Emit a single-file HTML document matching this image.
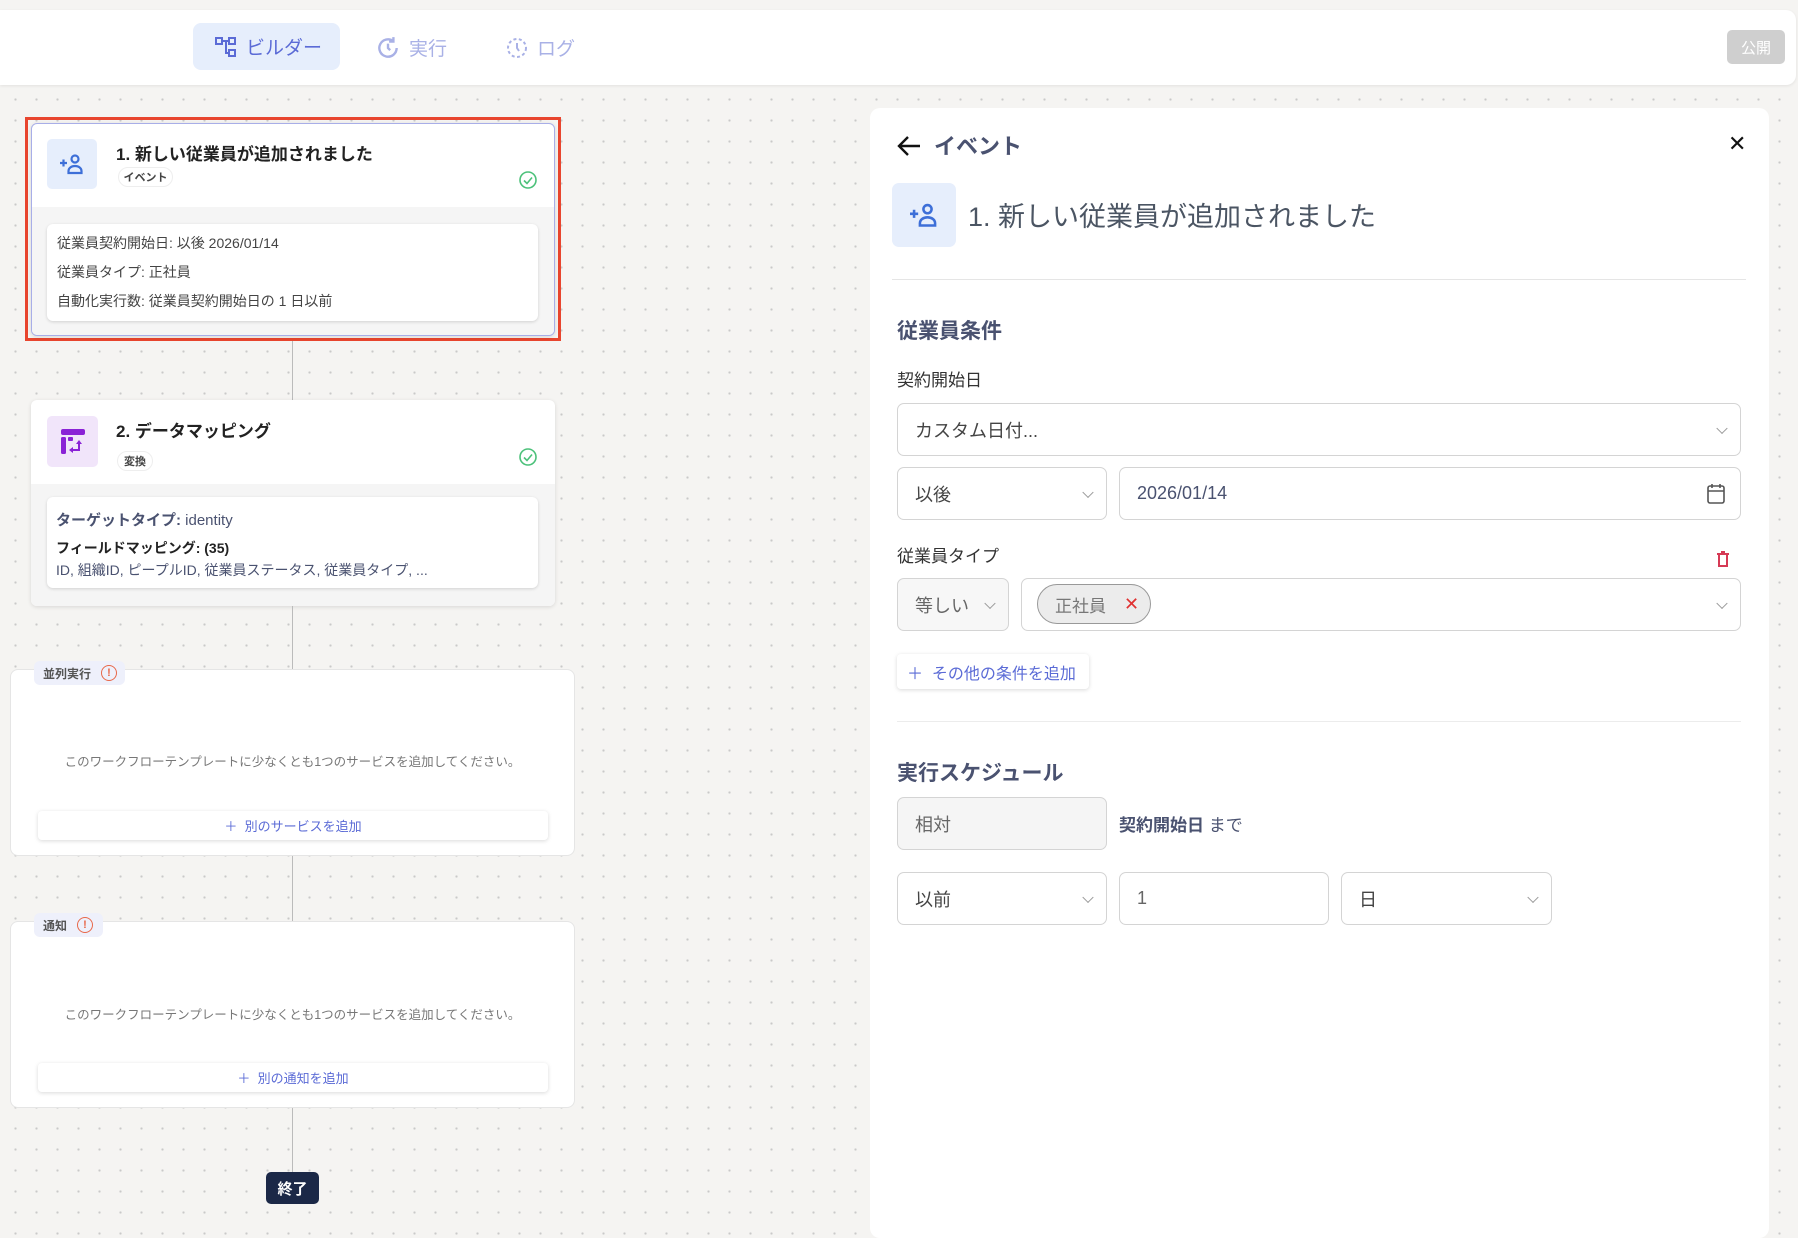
<!DOCTYPE html>
<html><head><meta charset="utf-8"><style>
*{box-sizing:border-box;margin:0;padding:0}
body{width:1798px;height:1220px;overflow:hidden;position:relative;font-family:"Liberation Sans","Noto Sans CJK JP",sans-serif;background-color:#f5f4f2;background-image:radial-gradient(circle,#c9c9c9 1px,transparent 1.3px);background-size:21px 21px;background-position:5px 5px;color:#333}
.a{position:absolute}
.top{left:0;top:10px;width:1796px;height:75px;background:#fff;border-radius:0 10px 10px 0;box-shadow:0 1px 3px rgba(0,0,0,.08)}
.tab{display:flex;align-items:center;gap:8px;font-size:19px;color:#a9b1e6}
.card{background:#fff;border-radius:6px;box-shadow:0 1px 4px rgba(0,0,0,.12);overflow:hidden}
.gray{background:#f5f5f5}
.inner{background:#fff;border-radius:6px;box-shadow:0 1px 3px rgba(0,0,0,.15)}
.title{font-size:17px;font-weight:bold;color:#222}
.badge{border:1px solid #eee;border-radius:11px;font-size:11px;font-weight:bold;color:#444;display:flex;align-items:center;justify-content:center}
.line{width:1px;background:#bbb;left:292px}
.box{background:#fff;border:1px solid #e5e5e5;border-radius:8px}
.lbl{background:#eef0fb;border-radius:6px;font-size:12px;font-weight:bold;color:#555;display:flex;align-items:center;padding-left:9px;gap:10px}
.warn{width:16px;height:16px;border:1.6px solid #e8684a;border-radius:50%;color:#e8684a;font-size:11px;display:flex;align-items:center;justify-content:center;font-weight:bold}
.msg{font-size:12.5px;color:#777;width:565px;text-align:center;left:10px}
.btn{background:#fff;border-radius:4px;box-shadow:0 1px 4px rgba(0,0,0,.15);font-size:13px;color:#5b6bd6;display:flex;align-items:center;justify-content:center}
.in{border:1px solid #d4d4d4;border-radius:7px;background:#fff;font-size:18px;color:#444;display:flex;align-items:center;padding-left:17px}
.chev{position:absolute;right:14px;top:50%;width:8px;height:8px;border-right:1.3px solid #999;border-bottom:1.3px solid #999;transform:translateY(-70%) rotate(45deg)}
.h{font-size:21px;font-weight:bold;color:#4a5270}
.l{font-size:17px;color:#333}
</style></head><body>
<div class="a top"></div>
<div class="a" style="left:193px;top:23px;width:147px;height:47px;background:#e6eefc;border-radius:8px"></div>
<div class="a tab" style="left:214px;top:33px;color:#5b6bd6">
<svg width="24" height="24" viewBox="0 0 24 24" fill="none" stroke="#5b6bd6" stroke-width="2"><rect x="2" y="3" width="6" height="6"/><rect x="15" y="3" width="6" height="6"/><rect x="15" y="15" width="6" height="6"/><path d="M8 6h7M12 6v12h3"/></svg>ビルダー</div>
<div class="a tab" style="left:375px;top:34px"><svg width="26" height="26" viewBox="0 0 24 24" fill="none" stroke="#a9b1e6" stroke-width="2.2"><path d="M20 12a8 8 0 1 1-3-6.2M17 2v4h-4M12 8v4l2 2"/></svg>実行</div>
<div class="a tab" style="left:505px;top:34px"><svg width="24" height="24" viewBox="0 0 24 24" fill="none" stroke="#a9b1e6" stroke-width="2" stroke-dasharray="3 2.5"><circle cx="12" cy="12" r="9"/><path d="M12 7v5l2 3" stroke-dasharray="none"/></svg>ログ</div>
<div class="a" style="left:1727px;top:30px;width:58px;height:34px;background:#cfcfcf;border-radius:5px;color:#fff;font-size:15px;display:flex;align-items:center;justify-content:center">公開</div>

<div class="a" style="left:25px;top:117px;width:536px;height:224px;border:3px solid #e8452e"></div>
<div class="a card" style="left:31px;top:123px;width:524px;height:213px;border:1px solid #a8aee8">
 <div class="a gray" style="left:0;top:83px;width:100%;height:130px"></div>
</div>
<div class="a" style="left:47px;top:139px;width:50px;height:50px;background:#e6eefc;border-radius:5px;display:flex;align-items:center;justify-content:center"><svg width="26" height="24" viewBox="0 0 26 24" fill="none" stroke="#3d6fd8" stroke-width="2.2"><path d="M1 11h7M4.5 7.5v7"/><circle cx="16" cy="7" r="3.5"/><path d="M9.5 21v-2c0-3 3-5 6.5-5s6.5 2 6.5 5v2z"/></svg></div>
<div class="a title" style="left:116px;top:140px">1. 新しい従業員が追加されました</div>
<div class="a badge" style="left:118px;top:167px;width:55px;height:20px">イベント</div>
<svg class="a" style="left:519px;top:171px" width="18" height="18" viewBox="0 0 18 18" fill="none" stroke="#4cc17a" stroke-width="1.6"><circle cx="9" cy="9" r="8"/><path d="M5 9.5l3 3 5-6"/></svg>
<div class="a inner" style="left:47px;top:224px;width:491px;height:97px"></div>
<div class="a" style="left:57px;top:229px;font-size:14px;color:#444;line-height:29px">従業員契約開始日: 以後 2026/01/14<br>従業員タイプ: 正社員<br>自動化実行数: 従業員契約開始日の 1 日以前</div>

<div class="a line" style="top:341px;height:59px"></div>
<div class="a card" style="left:31px;top:400px;width:524px;height:206px">
 <div class="a gray" style="left:0;top:84px;width:100%;height:122px"></div>
</div>
<div class="a" style="left:47px;top:416px;width:51px;height:51px;background:#f1e5fa;border-radius:5px;display:flex;align-items:center;justify-content:center"><svg width="26" height="28" viewBox="0 0 26 28" fill="#8a22d6"><rect x="1" y="1" width="24" height="6" rx="2"/><rect x="1" y="9" width="5" height="17" rx="1.5"/><rect x="8" y="9" width="5" height="4" rx="1"/><path d="M9 22l4-3v2h5v-5h-2l3-4 3 4h-2v7h-7v2z"/></svg></div>
<div class="a title" style="left:116px;top:417px">2. データマッピング</div>
<div class="a badge" style="left:117px;top:451px;width:36px;height:20px">変換</div>
<svg class="a" style="left:519px;top:448px" width="18" height="18" viewBox="0 0 18 18" fill="none" stroke="#4cc17a" stroke-width="1.6"><circle cx="9" cy="9" r="8"/><path d="M5 9.5l3 3 5-6"/></svg>
<div class="a inner" style="left:47px;top:497px;width:491px;height:91px"></div>
<div class="a" style="left:56px;top:509px;font-size:15px;color:#4a5270"><b>ターゲットタイプ:</b> identity</div>
<div class="a" style="left:56px;top:538px;font-size:14px;color:#222;font-weight:bold">フィールドマッピング: (35)</div>
<div class="a" style="left:56px;top:560px;font-size:14px;color:#4a5270">ID, 組織ID, ピープルID, 従業員ステータス, 従業員タイプ, ...</div>

<div class="a line" style="top:606px;height:63px"></div>
<div class="a box" style="left:10px;top:669px;width:565px;height:187px"></div>
<div class="a lbl" style="left:34px;top:661px;width:91px;height:24px">並列実行<span class="warn">!</span></div>
<div class="a msg" style="top:751px">このワークフローテンプレートに少なくとも1つのサービスを追加してください。</div>
<div class="a btn" style="left:38px;top:811px;width:510px;height:29px">＋&nbsp; 別のサービスを追加</div>

<div class="a line" style="top:856px;height:65px"></div>
<div class="a box" style="left:10px;top:921px;width:565px;height:187px"></div>
<div class="a lbl" style="left:34px;top:913px;width:69px;height:24px">通知<span class="warn">!</span></div>
<div class="a msg" style="top:1004px">このワークフローテンプレートに少なくとも1つのサービスを追加してください。</div>
<div class="a btn" style="left:38px;top:1063px;width:510px;height:29px">＋&nbsp; 別の通知を追加</div>
<div class="a line" style="top:1108px;height:64px"></div>
<div class="a" style="left:266px;top:1172px;width:53px;height:32px;background:#1b2847;border-radius:5px;color:#fff;font-size:15px;font-weight:bold;display:flex;align-items:center;justify-content:center">終了</div>

<div class="a" style="left:870px;top:108px;width:899px;height:1130px;background:#fff;border-radius:10px"></div>
<svg class="a" style="left:896px;top:134px" width="26" height="24" viewBox="0 0 26 24" fill="none" stroke="#111" stroke-width="2.4"><path d="M24 12H3M12 3l-9 9 9 9"/></svg>
<div class="a" style="left:934px;top:129px;font-size:22px;font-weight:bold;color:#4a5270">イベント</div>
<div class="a" style="left:1728px;top:131px;font-size:22px;color:#111">✕</div>
<div class="a" style="left:892px;top:183px;width:64px;height:64px;background:#e6eefc;border-radius:7px;display:flex;align-items:center;justify-content:center"><svg width="32" height="28" viewBox="0 0 26 24" fill="none" stroke="#3d6fd8" stroke-width="2.2"><path d="M1 11h7M4.5 7.5v7"/><circle cx="16" cy="7" r="3.5"/><path d="M9.5 21v-2c0-3 3-5 6.5-5s6.5 2 6.5 5v2z"/></svg></div>
<div class="a" style="left:968px;top:195px;font-size:27px;color:#4b5563">1. 新しい従業員が追加されました</div>
<div class="a" style="left:892px;top:279px;width:854px;height:1px;background:#e5e5e5"></div>
<div class="a h" style="left:897px;top:315px">従業員条件</div>
<div class="a l" style="left:897px;top:366px">契約開始日</div>
<div class="a in" style="left:897px;top:403px;width:844px;height:53px">カスタム日付...<span class="chev"></span></div>
<div class="a in" style="left:897px;top:467px;width:210px;height:53px">以後<span class="chev"></span></div>
<div class="a in" style="left:1119px;top:467px;width:622px;height:53px;color:#4a5270">2026/01/14
<svg style="position:absolute;right:14px;top:15px" width="20" height="22" viewBox="0 0 20 22" fill="none" stroke="#555" stroke-width="1.6"><rect x="2" y="3" width="16" height="17" rx="2"/><path d="M2 8h16M6 1v4M14 1v4"/></svg></div>
<div class="a l" style="left:897px;top:542px">従業員タイプ</div>
<svg class="a" style="left:1716px;top:551px" width="14" height="17" viewBox="0 0 14 17" fill="none" stroke="#d63a55" stroke-width="2"><path d="M1 3h12M5 1h4M3 4v11h8V4"/></svg>
<div class="a in" style="left:897px;top:578px;width:112px;height:53px;background:#f7f7f7;color:#666">等しい<span class="chev"></span></div>
<div class="a in" style="left:1021px;top:578px;width:720px;height:53px"><span class="chev"></span></div>
<div class="a" style="left:1037px;top:584px;width:114px;height:40px;border:1px solid #999;border-radius:20px;background:#ececec;font-size:17px;color:#777;display:flex;align-items:center;padding-left:17px">正社員<span style="color:#e03131;font-size:18px;margin-left:18px">✕</span></div>
<div class="a btn" style="left:897px;top:654px;width:192px;height:35px;font-size:16px;justify-content:flex-start;padding-left:10px">＋&nbsp; その他の条件を追加</div>
<div class="a" style="left:897px;top:721px;width:844px;height:1px;background:#ececec"></div>
<div class="a h" style="left:897px;top:757px">実行スケジュール</div>
<div class="a in" style="left:897px;top:797px;width:210px;height:53px;background:#f5f5f5;color:#666">相対</div>
<div class="a" style="left:1119px;top:811px;font-size:17px;color:#4a5270"><b>契約開始日</b> まで</div>
<div class="a in" style="left:897px;top:872px;width:210px;height:53px">以前<span class="chev"></span></div>
<div class="a in" style="left:1119px;top:872px;width:210px;height:53px;color:#666">1</div>
<div class="a in" style="left:1341px;top:872px;width:211px;height:53px">日<span class="chev"></span></div>
</body></html>
